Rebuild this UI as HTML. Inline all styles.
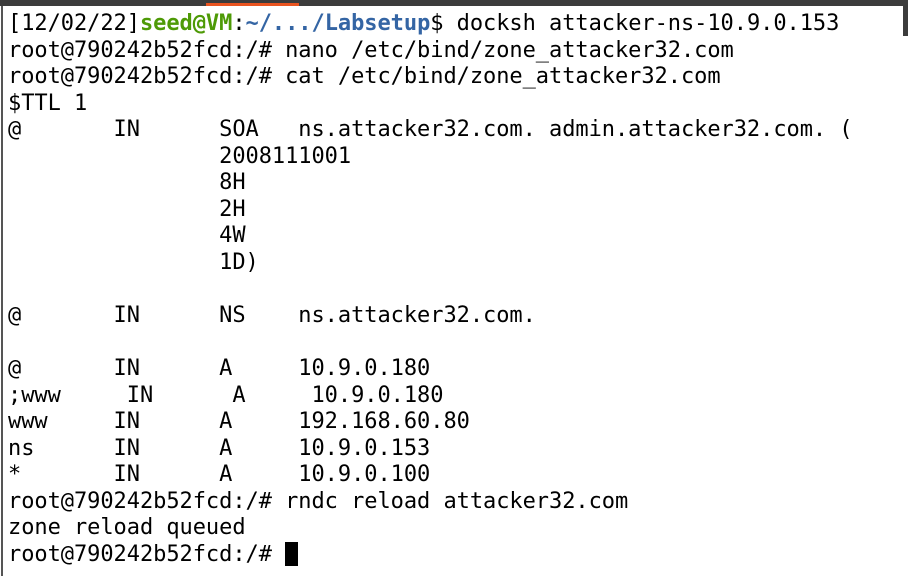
<!DOCTYPE html>
<html><head><style>
html,body{margin:0;padding:0;background:#fff;width:908px;height:576px;overflow:hidden;position:relative}
.bar{position:absolute;left:0;top:0;width:908px;height:6px;background:#3c3c3c}
.or{position:absolute;left:206px;top:3px;width:93px;height:3px;background:#e95420}
.lb{position:absolute;left:1px;top:6px;width:2px;height:570px;background:#555}
.rb{position:absolute;left:903px;top:6px;width:5px;height:30px;background:#3c3c3c}
pre{position:absolute;left:8px;top:11px;margin:0;font-family:"DejaVu Sans Mono","Liberation Mono",monospace;font-size:22px;line-height:26.55px;color:#000;letter-spacing:-0.05px}
.g{color:#4e9a06;font-weight:bold}.b{color:#3465a4;font-weight:bold}
.cur{display:inline-block;width:13px;height:24px;background:#000;vertical-align:-5px}
</style></head><body>
<div class="bar"></div><div class="or"></div><div class="lb"></div><div class="rb"></div>
<pre>[12/02/22]<span class="g">seed@VM</span>:<span class="b">~/.../Labsetup</span>$ docksh attacker-ns-10.9.0.153
root@790242b52fcd:/# nano /etc/bind/zone_attacker32.com
root@790242b52fcd:/# cat /etc/bind/zone_attacker32.com
$TTL 1
@       IN      SOA   ns.attacker32.com. admin.attacker32.com. (
                2008111001
                8H
                2H
                4W
                1D)

@       IN      NS    ns.attacker32.com.

@       IN      A     10.9.0.180
;www     IN      A     10.9.0.180
www     IN      A     192.168.60.80
ns      IN      A     10.9.0.153
*       IN      A     10.9.0.100
root@790242b52fcd:/# rndc reload attacker32.com
zone reload queued
root@790242b52fcd:/# <span class="cur"></span></pre>
</body></html>
